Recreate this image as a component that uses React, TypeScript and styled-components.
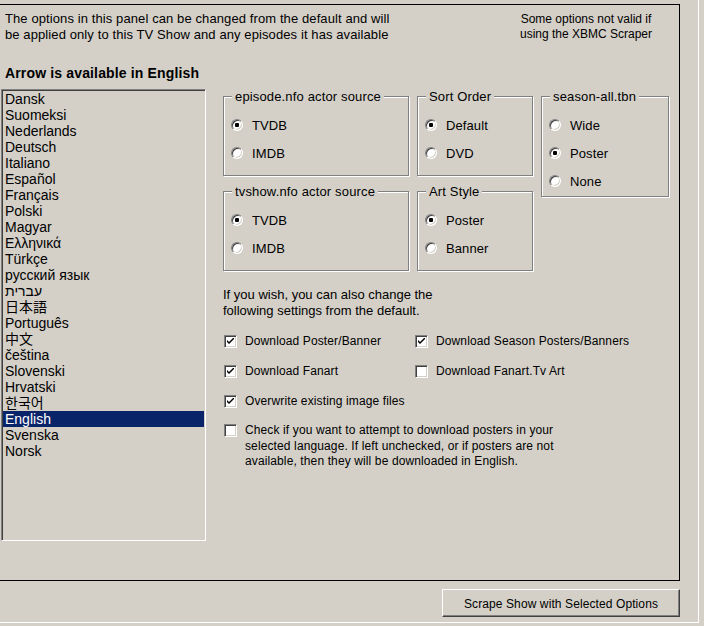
import React from "react";
import styled, { createGlobalStyle } from "styled-components";

const Global = createGlobalStyle`
  html, body { margin: 0; padding: 0; background: #d4d0c8; }
  body {
    font-family: "Liberation Sans", Arial, "Noto Sans CJK JP", sans-serif;
    color: #000;
    overflow: hidden;
  }
  * { box-sizing: border-box; }
`;

const Frame = styled.div`
  width: 699px;
  height: 623px;
  border-right: 1px solid #fff;
  border-bottom: 1px solid #fff;
  display: flex;
  flex-direction: column;
  overflow: hidden;
`;

const Panel = styled.div`
  margin-top: 4px;
  margin-left: -1px;
  width: 681px;
  height: 577px;
  border: 1px solid #000;
  display: flex;
  flex-direction: column;
`;

const Header = styled.div`
  display: flex;
  justify-content: space-between;
  padding: 6px 13px 0 5px;
`;

const Intro = styled.div`
  font-size: 13px;
  line-height: 16px;
  letter-spacing: 0.1px;
  white-space: nowrap;
`;

const Note = styled.div`
  width: 160px;
  font-size: 12px;
  line-height: 15px;
  text-align: center;
  white-space: nowrap;
  padding-top: 1px;
`;

const Title = styled.div`
  margin-top: 22px;
  padding-left: 5px;
  font-size: 14px;
  font-weight: bold;
  line-height: 16px;
  letter-spacing: 0.15px;
`;

const MainRow = styled.div`
  display: flex;
  margin-top: 8px;
  padding-left: 1px;
`;

const ListBox = styled.div`
  width: 205px;
  height: 452px;
  border: 1px solid;
  border-color: #808080 #fff #fff #808080;
  box-shadow: inset 1px 1px 0 #404040, inset -1px -1px 0 #d4d0c8;
  padding: 1px;
  display: flex;
  flex-direction: column;
`;

const ListItem = styled.div<{ $selected?: boolean }>`
  height: 16px;
  line-height: 16px;
  font-size: 14px;
  padding-left: 2px;
  white-space: nowrap;
  font-family: "Liberation Sans", Arial, "Noto Sans CJK JP", sans-serif;
  background: ${(p) => (p.$selected ? "#0a246a" : "transparent")};
  color: ${(p) => (p.$selected ? "#fff" : "#000")};
`;

const Options = styled.div`
  margin-left: 17px;
  padding-top: 7px;
  display: flex;
  flex-direction: column;
`;

const GroupGrid = styled.div`
  display: grid;
  grid-template-columns: 186px 116px 128px;
  grid-template-rows: 80px 80px;
  column-gap: 8px;
  row-gap: 15px;
`;

const GroupBox = styled.div<{ $h?: number; $col: number; $row: string }>`
  position: relative;
  height: ${(p) => p.$h ?? 80}px;
  align-self: start;
  grid-column: ${(p) => p.$col};
  grid-row: ${(p) => p.$row};
  border: 1px solid #808080;
  box-shadow: inset 1px 1px 0 #fff, 1px 1px 0 #fff;
  padding: 14px 0 0 7px;
  display: flex;
  flex-direction: column;
`;

const Legend = styled.span`
  position: absolute;
  top: -8px;
  left: 8px;
  padding: 0 3px;
  background: #d4d0c8;
  font-size: 13px;
  line-height: 15px;
  letter-spacing: 0.15px;
  white-space: nowrap;
`;

const RadioRow = styled.label`
  display: flex;
  align-items: center;
  height: 28px;
  font-size: 13px;
  letter-spacing: 0.1px;
`;

const RadioDot = styled.span<{ $on?: boolean }>`
  position: relative;
  width: 12px;
  height: 12px;
  flex: none;
  border-radius: 50%;
  border: 1px solid;
  border-color: #808080 #fff #fff #808080;
  box-shadow: inset 1px 1px 0 #404040, inset -1px -1px 0 #d4d0c8;
  background: #fff;
  margin-right: 9px;
  &::after {
    content: "";
    display: ${(p) => (p.$on ? "block" : "none")};
    position: absolute;
    left: 3px;
    top: 3px;
    width: 4px;
    height: 4px;
    border-radius: 1px;
    background: #000;
  }
`;

const Para = styled.div`
  margin-top: 16px;
  font-size: 13px;
  line-height: 16px;
  white-space: nowrap;
`;

const CheckGrid = styled.div`
  margin-top: 12px;
  display: grid;
  grid-template-columns: 191px 1fr;
  grid-auto-rows: minmax(20px, auto);
  row-gap: 10px;
`;

const CheckRow = styled.label<{ $wide?: boolean; $top?: boolean }>`
  display: flex;
  align-items: ${(p) => (p.$top ? "flex-start" : "center")};
  grid-column: ${(p) => (p.$wide ? "1 / span 2" : "auto")};
  margin-top: ${(p) => (p.$top ? "2px" : "0")};
  padding-left: 1px;
  font-size: 12px;
  letter-spacing: 0.12px;
  white-space: nowrap;
`;

const CheckBox = styled.span<{ $top?: boolean }>`
  width: 13px;
  height: 13px;
  flex: none;
  border: 1px solid;
  border-color: #808080 #fff #fff #808080;
  box-shadow: inset 1px 1px 0 #404040, inset -1px -1px 0 #d4d0c8;
  background: #fff;
  margin-right: 8px;
  margin-top: ${(p) => (p.$top ? "1px" : "0")};
  display: flex;
  align-items: center;
  justify-content: center;
`;

const CheckText = styled.span`
  line-height: 15.5px;
`;

const Footer = styled.div`
  width: 680px;
  margin-top: 8px;
  display: flex;
  justify-content: flex-end;
`;

const Button = styled.button`
  width: 238px;
  height: 28px;
  padding: 2px 0 0;
  border: 1px solid;
  border-color: #fff #404040 #404040 #fff;
  box-shadow: inset -1px -1px 0 #808080;
  background: #d4d0c8;
  font-family: "Liberation Sans", Arial, sans-serif;
  font-size: 12px;
  letter-spacing: 0.1px;
  color: #000;
`;

const languages = [
  "Dansk", "Suomeksi", "Nederlands", "Deutsch", "Italiano", "Español", "Français",
  "Polski", "Magyar", "Ελληνικά", "Türkçe", "русский язык", "עברית", "日本語",
  "Português", "中文", "čeština", "Slovenski", "Hrvatski", "한국어", "English",
  "Svenska", "Norsk",
];

type Group = {
  title: string;
  options: string[];
  selected: number;
  col: number;
  row: string;
  h?: number;
};

const groups: Group[] = [
  { title: "episode.nfo actor source", options: ["TVDB", "IMDB"], selected: 0, col: 1, row: "1" },
  { title: "Sort Order", options: ["Default", "DVD"], selected: 0, col: 2, row: "1" },
  { title: "season-all.tbn", options: ["Wide", "Poster", "None"], selected: 1, col: 3, row: "1 / span 2", h: 101 },
  { title: "tvshow.nfo actor source", options: ["TVDB", "IMDB"], selected: 0, col: 1, row: "2" },
  { title: "Art Style", options: ["Poster", "Banner"], selected: 0, col: 2, row: "2" },
];

const Tick = () => (
  <svg width="7" height="7" viewBox="0 0 7 7">
    <path d="M0 2 L0 4 L2 6 L7 1 L7 -1 L2 4 Z" fill="#000" />
  </svg>
);

const Check: React.FC<{ on?: boolean; top?: boolean }> = ({ on, top }) => (
  <CheckBox $top={top}>{on && <Tick />}</CheckBox>
);

export default function App() {
  return (
    <>
      <Global />
      <Frame>
        <Panel>
          <Header>
            <Intro>
              The options in this panel can be changed from the default and will
              <br />
              be applied only to this TV Show and any episodes it has available
            </Intro>
            <Note>
              Some options not valid if
              <br />
              using the XBMC Scraper
            </Note>
          </Header>
          <Title>Arrow is available in English</Title>
          <MainRow>
            <ListBox>
              {languages.map((l) => (
                <ListItem key={l} $selected={l === "English"}>
                  {l}
                </ListItem>
              ))}
            </ListBox>
            <Options>
              <GroupGrid>
                {groups.map((g) => (
                  <GroupBox key={g.title} $h={g.h} $col={g.col} $row={g.row}>
                    <Legend>{g.title}</Legend>
                    {g.options.map((o, i) => (
                      <RadioRow key={o}>
                        <RadioDot $on={i === g.selected} />
                        {o}
                      </RadioRow>
                    ))}
                  </GroupBox>
                ))}
              </GroupGrid>
              <Para>
                If you wish, you can also change the
                <br />
                following settings from the default.
              </Para>
              <CheckGrid>
                <CheckRow>
                  <Check on />
                  Download Poster/Banner
                </CheckRow>
                <CheckRow>
                  <Check on />
                  Download Season Posters/Banners
                </CheckRow>
                <CheckRow>
                  <Check on />
                  Download Fanart
                </CheckRow>
                <CheckRow>
                  <Check />
                  Download Fanart.Tv Art
                </CheckRow>
                <CheckRow $wide>
                  <Check on />
                  Overwrite existing image files
                </CheckRow>
                <CheckRow $wide $top>
                  <Check top />
                  <CheckText>
                    Check if you want to attempt to download posters in your
                    <br />
                    selected language. If left unchecked, or if posters are not
                    <br />
                    available, then they will be downloaded in English.
                  </CheckText>
                </CheckRow>
              </CheckGrid>
            </Options>
          </MainRow>
        </Panel>
        <Footer>
          <Button>Scrape Show with Selected Options</Button>
        </Footer>
      </Frame>
    </>
  );
}
